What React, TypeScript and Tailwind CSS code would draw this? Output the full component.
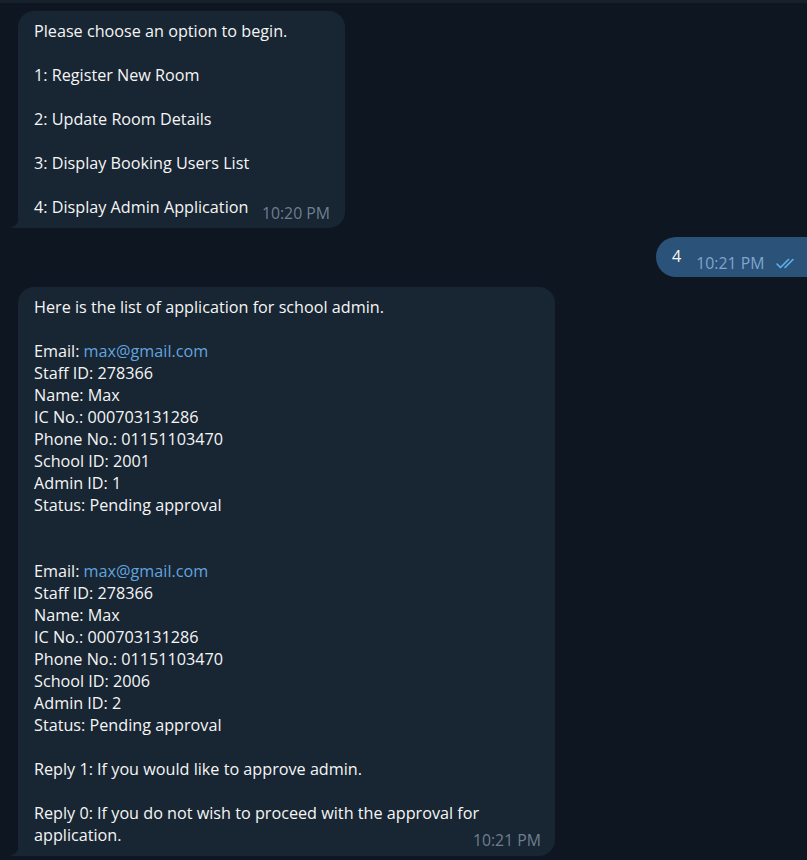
import React from "react";

const font = { fontFamily: '"Open Sans", "Noto Sans", sans-serif' };

const Tail = () => (
  <svg
    className="absolute bottom-0 left-[-8px]"
    width="9"
    height="17"
    viewBox="0 0 9 17"
  >
    <path d="M9 0 V6 C9 11 6 15 1 16.5 C0.5 16.7 0.5 17 1 17 H9 Z" fill="#182533" />
  </svg>
);

const Link = ({ children }: { children: React.ReactNode }) => (
  <span className="text-[#62a4df]">{children}</span>
);

const Application = ({ school, admin }: { school: string; admin: string }) => (
  <>
    <div>
      Email: <Link>max@gmail.com</Link>
    </div>
    <div>Staff ID: 278366</div>
    <div>Name: Max</div>
    <div>IC No.: 000703131286</div>
    <div>Phone No.: 01151103470</div>
    <div>School ID: {school}</div>
    <div>Admin ID: {admin}</div>
    <div>Status: Pending approval</div>
  </>
);

const Gap = () => <div className="h-[22px]" />;

export default function App() {
  return (
    <div
      className="w-[807px] h-[860px] bg-[#0e1621] overflow-hidden text-[16.2px] leading-[22px] text-[#f5f5f5]"
      style={font}
    >
      <div className="h-[3px] bg-[#17212b]" />

      <div className="flex flex-col pl-[18px] pt-[8px]">
        <div className="relative w-[327px] rounded-2xl rounded-bl-none bg-[#182533] pl-4 pr-[15px] pt-[9px] pb-[10px]">
          <div>Please choose an option to begin.</div>
          <Gap />
          <div>1: Register New Room</div>
          <Gap />
          <div>2: Update Room Details</div>
          <Gap />
          <div>3: Display Booking Users List</div>
          <Gap />
          <div className="flex items-end justify-between">
            <span>4: Display Admin Application</span>
            <span className="text-[15.8px] leading-[18px] text-[#6d7f8f] translate-y-[4px]">
              10:20 PM
            </span>
          </div>
          <Tail />
        </div>

        <div className="mt-[9px] ml-auto mr-[-12px] flex h-[40px] w-[163px] items-center rounded-l-[20px] bg-[#2b5278] pl-4">
          <span className="mr-[15px] -translate-y-[1px]">4</span>
          <span className="text-[15.8px] text-[#7fa6cc] translate-y-[6px]">10:21 PM</span>
          <svg className="ml-[12px] translate-y-[6px]" width="22" height="11" viewBox="0 0 22 11" fill="none">
            <path d="M1 6 L4.5 9.5 L12.5 1.5" stroke="#5eb2ef" strokeWidth="1.6" strokeLinecap="round" strokeLinejoin="round" />
            <path d="M9 9.5 L17 1.5" stroke="#5eb2ef" strokeWidth="1.6" strokeLinecap="round" />
          </svg>
        </div>

        <div className="relative mt-[10px] w-[537px] rounded-2xl rounded-bl-none bg-[#182533] pl-4 pr-[14px] pt-[9px] pb-[10px]">
          <div>Here is the list of application for school admin.</div>
          <Gap />
          <Application school="2001" admin="1" />
          <Gap />
          <Gap />
          <Application school="2006" admin="2" />
          <Gap />
          <div>Reply 1: If you would like to approve admin.</div>
          <Gap />
          <div className="pr-[50px]">
            Reply 0: If you do not wish to proceed with the approval for application.
          </div>
          <span className="absolute right-[14px] bottom-[7px] text-[15.8px] leading-[18px] text-[#6d7f8f]">
            10:21 PM
          </span>
          <Tail />
        </div>
      </div>
    </div>
  );
}
